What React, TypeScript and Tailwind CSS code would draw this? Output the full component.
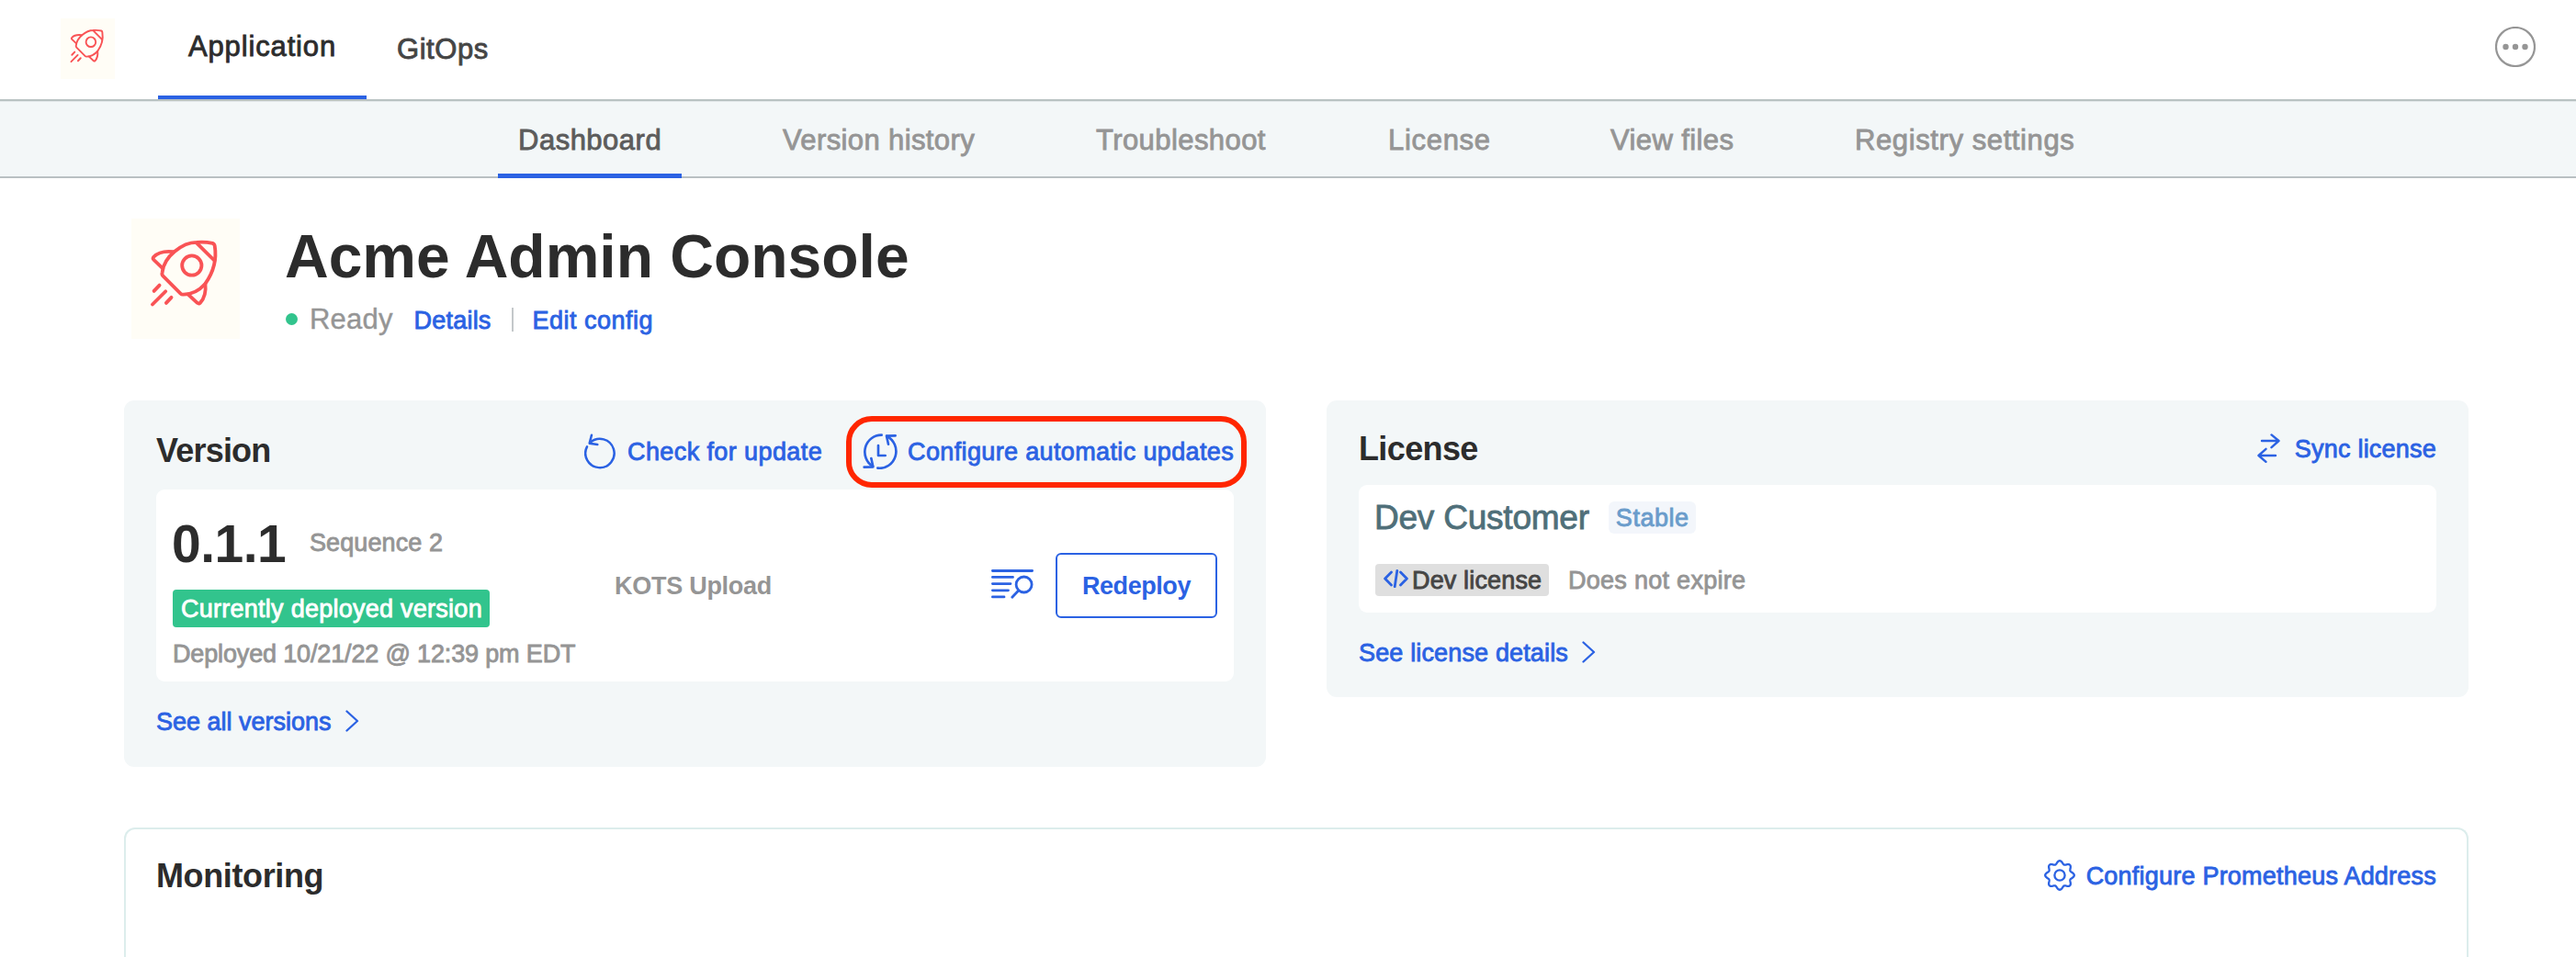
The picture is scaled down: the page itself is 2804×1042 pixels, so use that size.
import React from "react";

const medium = "[-webkit-text-stroke:0.85px_currentColor]";
const link = "text-[27px] leading-[32px] text-[#2b62e3] whitespace-nowrap [-webkit-text-stroke:0.85px_currentColor]";

function Rocket({ className }: { className: string }) {
  return (
    <svg className={className} viewBox="22 24 355 395" preserveAspectRatio="none" fill="none" stroke="#f95355" strokeWidth="11.5" strokeLinecap="round" strokeLinejoin="round">
      <path d="M164 132C184 115 211 102 236 102C255 100 274 102 288 105Q294 107 295 114C300 145 298 190 264 238C246 258 222 273 193 273Q187 274 183 270L126 213Q121 208 123 201C126 175 142 150 164 132Z" />
      <path d="M160 133C134 130 108 136 95 150Q91 155 95 159L125 188" />
      <path d="M236 104L294 162" />
      <circle cx="220" cy="178" r="32" />
      <path d="M264 238C267 264 260 287 247 301Q243 305 238 301L208 273" />
      <path d="M96 262L114 243M91 306L134 263M136 301L153 283" />
    </svg>
  );
}

function CheckIcon() {
  return (
    <svg className="h-[39px] w-[34px] shrink-0" viewBox="30 35 102 117" fill="none" stroke="#2b62e3" strokeWidth="7.5" strokeLinecap="round" strokeLinejoin="round">
      <path d="M50 64A47 47 0 1 1 39 78" />
      <path d="M54 40L47 67L73 71" />
    </svg>
  );
}

function AutoIcon() {
  return (
    <svg className="h-[39px] w-[38px] shrink-0" viewBox="942 35 114 117" fill="none" stroke="#2b62e3" strokeWidth="8" strokeLinecap="round" strokeLinejoin="round">
      <path d="M1004 40A54 55 0 0 0 975 142" />
      <path d="M991 148A54 55 0 0 0 1021 44" />
      <path d="M1049 42L1020 43L1026 70" />
      <path d="M947 145L976 144L970 116" />
      <path d="M993 74V107H1016" />
    </svg>
  );
}

function LogsIcon() {
  return (
    <svg className="h-[32px] w-[46px]" viewBox="0 0 46 32" fill="none" stroke="#2b62e3" strokeWidth="2.8" strokeLinecap="round">
      <path d="M1.4 1.5H44.6M1.4 8.4H23.5M1.4 15.6H21M1.4 22.8H18.5M1.4 29.9H14" />
      <circle cx="35.6" cy="16.5" r="8.5" />
      <path d="M29.2 23.5L22.8 30.2" />
    </svg>
  );
}

function SyncIcon() {
  return (
    <svg className="h-[32px] w-[25px]" viewBox="0 0 25 32" fill="none" stroke="#2b62e3" strokeWidth="2.4" strokeLinecap="round" strokeLinejoin="round">
      <path d="M5 8H23.5M15.5 1.4L23.5 8L15.5 15.2" />
      <path d="M20 24H1.5M9.5 16.8L1.5 24L9.5 30.8" />
    </svg>
  );
}

const gearPath =
  Array.from({ length: 144 }, (_, i) => {
    const a = (i / 144) * Math.PI * 2;
    const r = 14.1 + 1.7 * Math.cos(8 * a);
    return `${i ? "L" : "M"}${(17 + r * Math.cos(a)).toFixed(2)} ${(17 + r * Math.sin(a)).toFixed(2)}`;
  }).join("") + "Z";

function GearIcon() {
  return (
    <svg className="h-[34px] w-[34px]" viewBox="0 0 34 34" fill="none" stroke="#2b62e3" strokeWidth="2.3" strokeLinejoin="round">
      <path d={gearPath} />
      <circle cx="17" cy="17" r="5.6" />
    </svg>
  );
}

function CodeIcon() {
  return (
    <svg className="h-[20px] w-[27px]" viewBox="0 0 27 20" fill="none" stroke="#2b62e3" strokeWidth="2.8" strokeLinecap="round" strokeLinejoin="round">
      <path d="M8.5 3L1.6 10L8.5 17M18.5 3L25.4 10L18.5 17M14.8 1.5L12.2 18.7" />
    </svg>
  );
}

function Chevron() {
  return (
    <svg className="mt-[3px] ml-[14px] h-[24px] w-[16px]" viewBox="0 0 16 24" fill="none" stroke="#2b62e3" strokeWidth="2.3" strokeLinecap="round" strokeLinejoin="round">
      <path d="M2.5 1.5L14 12L2.5 22.5" />
    </svg>
  );
}

const tabs = [
  { label: "Version history", cls: "w-[253px] tracking-[0.38px]" },
  { label: "Troubleshoot", cls: "w-[230px] tracking-[0.42px]" },
  { label: "License", cls: "w-[154px] tracking-[0.7px]" },
  { label: "View files", cls: "w-[178px] tracking-[0.4px]" },
  { label: "Registry settings", cls: "w-[284px] tracking-[0.6px]" },
];

function Header() {
  return (
    <header className="flex h-[110px] items-start border-b-2 border-[#b9c2c2] bg-white">
      <div className="mt-5 ml-[66px] h-[66px] w-[59px] bg-[#fffdf6]">
        <Rocket className="h-full w-full" />
      </div>
      <div className={`ml-[47px] flex h-[108px] w-[227px] justify-center border-b-4 border-[#2b62e3] pt-[33px] text-[31px] leading-9 tracking-[0.86px] text-[#2c2c2c] ${medium}`}>Application</div>
      <div className={`ml-[33px] pt-[36px] text-[31px] leading-9 tracking-[0.55px] text-[#454545] ${medium}`}>GitOps</div>
      <svg className="mt-[29px] mr-[44px] ml-auto h-[44px] w-[44px]" viewBox="0 0 44 44">
        <circle cx="22" cy="22" r="21" fill="none" stroke="#959595" strokeWidth="2.2" />
        <g fill="#959595">
          <circle cx="11.5" cy="22" r="3.2" />
          <circle cx="22" cy="22" r="3.2" />
          <circle cx="32.5" cy="22" r="3.2" />
        </g>
      </svg>
    </header>
  );
}

function SubNav() {
  return (
    <nav className="flex h-[84px] gap-[88px] border-t border-b-2 border-t-[#e3e8ea] border-b-[#b9c0c3] bg-[#f3f7f8] pl-[542px] text-[31px] leading-9 text-[#959595]">
      <div className={`h-[83px] w-[200px] shrink-0 border-b-[5px] border-[#2b62e3] pt-[24px] pl-[22px] tracking-[0.5px] text-[#5c5c5c] ${medium}`}>Dashboard</div>
      {tabs.map((t) => (
        <div key={t.label} className={`shrink-0 pt-[24px] pl-[22px] whitespace-nowrap ${medium} ${t.cls}`}>{t.label}</div>
      ))}
    </nav>
  );
}

function AppTitle() {
  return (
    <section className="flex h-[242px] items-start pt-11 pl-[143px]">
      <div className="h-[131px] w-[118px] bg-[#fffdf6]">
        <Rocket className="h-full w-full" />
      </div>
      <div className="mt-[3px] ml-[49px]">
        <h1 className="text-[66px] leading-[76px] font-bold tracking-[0px] text-[#2c2c2c]">Acme Admin Console</h1>
        <div className="mt-3 flex items-start">
          <span className="mt-[12px] ml-px h-[13px] w-[13px] rounded-full bg-[#32c48d]" />
          <span className="mt-px ml-[13px] text-[31px] leading-9 tracking-[0.2px] text-[#959595] [-webkit-text-stroke:0.4px_currentColor]">Ready</span>
          <span className={`mt-1 ml-[23px] tracking-[0.2px] ${link}`}>Details</span>
          <span className="mt-[6px] ml-[22px] h-[26px] w-[2px] bg-[#c4c8ca]" />
          <span className={`mt-1 ml-[21px] tracking-[0.5px] ${link}`}>Edit config</span>
        </div>
      </div>
    </section>
  );
}

function VersionCard() {
  return (
    <section className="h-[399px] w-[1243px] rounded-[11px] bg-[#f3f7f8] px-[35px]">
      <div className="flex h-[97px] items-start justify-between">
        <h2 className="mt-[35px] text-[36px] leading-10 font-bold tracking-[-0.8px] text-[#2c2c2c]">Version</h2>
        <div className="mt-9 flex gap-[44px]">
          <div className="flex">
            <CheckIcon />
            <span className={`mt-[4px] ml-[13px] tracking-[0.4px] ${link}`}>Check for update</span>
          </div>
          <div className="relative flex">
            <AutoIcon />
            <span className={`mt-[4px] ml-[11px] tracking-[0.36px] ${link}`}>Configure automatic updates</span>
            <div className="absolute -top-[19px] -right-[14px] -left-[18px] h-[78px] rounded-[28px] border-[6px] border-[#ff2600]" />
          </div>
        </div>
      </div>
      <div className="flex h-[209px] items-center rounded-[9px] bg-white pr-[18px] pl-[17px]">
        <div className="h-full w-[482px] shrink-0 pt-[27px] text-[#959595]">
          <div className="flex">
            <span className="w-[119px] text-[57px] leading-[64px] font-bold tracking-[-0.5px] text-[#2c2c2c]">0.1.1</span>
            <span className={`mt-[15px] ml-[31px] text-[27px] leading-8 tracking-[0.11px] ${medium}`}>Sequence 2</span>
          </div>
          <div className={`mt-[18px] ml-px h-[41px] w-[345px] rounded bg-[#32c48d] pt-[5px] pl-[9px] text-[27px] leading-8 tracking-[0.26px] text-white ${medium}`}>Currently deployed version</div>
          <div className={`mt-[13px] ml-px text-[27px] leading-8 tracking-[-0.15px] whitespace-nowrap ${medium}`}>Deployed 10/21/22 @ 12:39 pm EDT</div>
        </div>
        <span className="text-[27px] leading-8 font-bold tracking-[-0.27px] whitespace-nowrap text-[#959595]">KOTS Upload</span>
        <div className="ml-auto flex items-center gap-6">
          <div className="pb-1">
            <LogsIcon />
          </div>
          <div className="flex h-[71px] w-[176px] items-center justify-center rounded-[6px] border-2 border-[#2b62e3] text-[27px] leading-8 font-bold tracking-[-0.44px] text-[#2b62e3]">Redeploy</div>
        </div>
      </div>
      <div className="mt-7 flex">
        <span className={link}>See all versions</span>
        <Chevron />
      </div>
    </section>
  );
}

function LicenseCard() {
  return (
    <section className="h-[323px] w-[1243px] rounded-[11px] bg-[#f3f7f8] px-[35px]">
      <div className="flex h-[92px] items-start justify-between">
        <h2 className="mt-[33px] text-[36px] leading-10 font-bold tracking-[-0.62px] text-[#2c2c2c]">License</h2>
        <div className="mt-9 flex">
          <SyncIcon />
          <span className={`mt-px ml-4 tracking-[0.22px] ${link}`}>Sync license</span>
        </div>
      </div>
      <div className="h-[139px] rounded-[9px] bg-white pt-[14px] pl-[17px]">
        <div className="flex">
          <span className={`text-[37px] leading-[44px] tracking-[-0.22px] text-[#4f6f79] ${medium}`}>Dev Customer</span>
          <span className={`mt-[4px] ml-[21px] h-[35px] w-[95px] rounded-[6px] bg-[#f3f6fb] pt-[2px] pl-[8px] text-[27px] leading-8 tracking-[0.55px] text-[#6a9ccb] ${medium}`}>Stable</span>
        </div>
        <div className="mt-[28px] ml-px flex">
          <div className="flex h-[35px] w-[189px] rounded bg-[#dfdfdf] pt-[2px] pl-[9px]">
            <div className="mt-[4px]">
              <CodeIcon />
            </div>
            <span className={`ml-[4px] text-[27px] leading-8 tracking-[0.15px] whitespace-nowrap text-[#454545] ${medium}`}>Dev license</span>
          </div>
          <span className={`mt-[2px] ml-[21px] text-[27px] leading-8 tracking-[0.28px] text-[#959595] ${medium}`}>Does not expire</span>
        </div>
      </div>
      <div className="mt-7 flex">
        <span className={`tracking-[0.15px] ${link}`}>See license details</span>
        <Chevron />
      </div>
    </section>
  );
}

function MonitoringCard() {
  return (
    <section className="mt-[66px] flex h-[141px] items-start justify-between rounded-t-[12px] border-2 border-b-0 border-[#dcedec] px-[33px]">
      <h2 className="mt-[31px] text-[36px] leading-10 font-bold tracking-[-0.38px] text-[#2c2c2c]">Monitoring</h2>
      <div className="mt-[33px] flex">
        <GearIcon />
        <span className={`mt-[2px] ml-3 tracking-[0.22px] ${link}`}>Configure Prometheus Address</span>
      </div>
    </section>
  );
}

export default function App() {
  return (
    <div className="h-[1042px] w-[2804px] overflow-hidden bg-white font-['Liberation_Sans',Arial,sans-serif]">
      <Header />
      <SubNav />
      <AppTitle />
      <main className="w-[2687px] pl-[135px]">
        <div className="flex h-[399px] items-start justify-between">
          <VersionCard />
          <LicenseCard />
        </div>
        <MonitoringCard />
      </main>
    </div>
  );
}
